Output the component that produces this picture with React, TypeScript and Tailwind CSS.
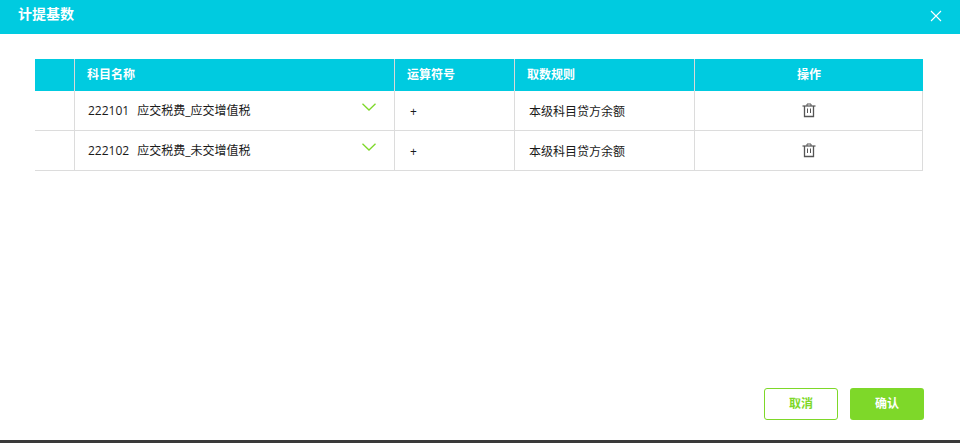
const FONT = "font-['Open_Sans','Noto_Sans_CJK_SC',sans-serif]";

const rows = [
  { code: "222101", name: "应交税费_应交增值税" },
  { code: "222102", name: "应交税费_未交增值税" },
];

function Chevron() {
  return (
    <svg width="14" height="8" viewBox="0 0 14 8" fill="none" className="mt-[-7px]">
      <path d="M0.5 0.8 L7 7 L13.5 0.8" stroke="#7ed829" strokeWidth="1.3" />
    </svg>
  );
}

function TrashIcon() {
  return (
    <svg width="14" height="15" viewBox="0 0 14 15" fill="none" stroke="#555" strokeWidth="1">
      <path d="M0.5 3 H13.5" stroke="#333" />
      <path d="M5 3 V1 H9 V3" />
      <path d="M2.5 3 V13.5 H11.5 V3" strokeWidth="1.3" />
      <path d="M5.5 5.5 V10 M8.5 5.5 V10" />
    </svg>
  );
}

export default function App() {
  return (
    <div className={`${FONT} w-[960px] h-[443px] flex flex-col bg-white overflow-hidden`}>
      <div className="h-[34px] shrink-0 bg-[#00cbe0] flex items-center justify-between pl-[18px] pr-[18px]">
        <span className="text-[14px] font-bold text-white leading-none mt-[-6px]">计提基数</span>
        <svg width="12" height="12" viewBox="0 0 12 12" stroke="#fff" strokeWidth="1.1" className="mt-[-3px]">
          <path d="M1 1 L11 11 M11 1 L1 11" />
        </svg>
      </div>

      <div className="flex-1 pt-[25px] pl-[35px] pr-[37px] flex flex-col">
        <div className="grid grid-cols-[40px_320px_120px_180px_228px] h-[32px] bg-[#00cbe0] text-white text-[12px] font-bold">
          <div className="border-r border-[#d9d9d9]" />
          <div className="border-r border-[#d9d9d9] pl-[12px] flex items-center">科目名称</div>
          <div className="border-r border-[#d9d9d9] pl-[12px] flex items-center">运算符号</div>
          <div className="border-r border-[#d9d9d9] pl-[12px] flex items-center">取数规则</div>
          <div className="flex items-center justify-center">操作</div>
        </div>
        {rows.map((r) => (
          <div
            key={r.code}
            className="grid grid-cols-[40px_320px_120px_180px_228px] h-[40px] border-b border-[#dcdcdc] text-[12px] text-[#1a1a1a]"
          >
            <div className="border-r border-[#dcdcdc]" />
            <div className="border-r border-[#dcdcdc] pl-[13px] pr-[18px] flex items-center justify-between">
              <span className="flex gap-[8px] pt-[1px]">
                <span>{r.code}</span>
                <span>{r.name}</span>
              </span>
              <Chevron />
            </div>
            <div className="border-r border-[#dcdcdc] pl-[15px] flex items-center pt-[3px]">+</div>
            <div className="border-r border-[#dcdcdc] pl-[14px] flex items-center pt-[3px]">本级科目贷方余额</div>
            <div className="border-r border-[#dcdcdc] flex items-center justify-center pl-[1px]">
              <TrashIcon />
            </div>
          </div>
        ))}
        <div className="mt-auto mb-[20px] flex justify-end gap-[12px] mr-[-1px]">
          <button className="w-[74px] h-[32px] rounded-[3px] border border-[#7ed829] bg-white text-[#7ed829] text-[12px] font-bold">
            取消
          </button>
          <button className="w-[74px] h-[32px] rounded-[3px] bg-[#7ed829] text-white text-[12px] font-bold">
            确认
          </button>
        </div>
      </div>
      <div className="h-[3px] shrink-0 bg-[#3a3a3a]" />
    </div>
  );
}
